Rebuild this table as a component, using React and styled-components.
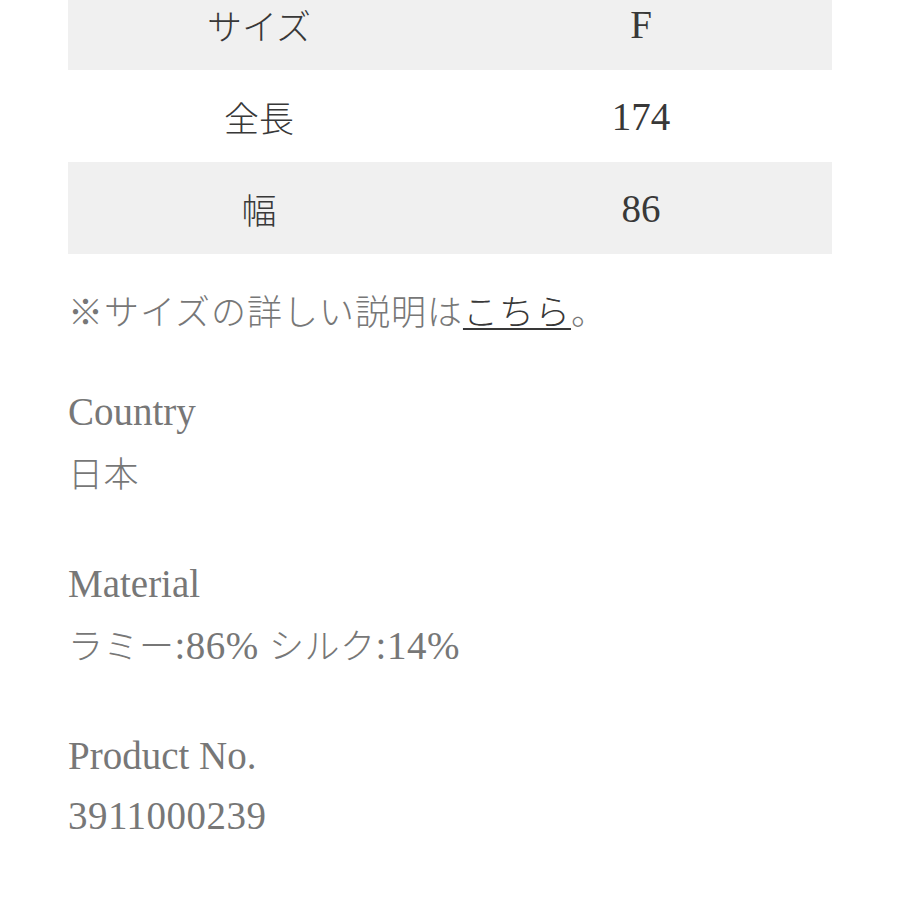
import React from 'react';
import styled, { createGlobalStyle } from 'styled-components';

const GlobalStyle = createGlobalStyle`
  html, body {
    margin: 0;
    padding: 0;
    background: #fff;
  }
  body {
    font-family: "Liberation Serif", "Noto Sans CJK JP", serif;
    font-size: 39px;
  }
`;

const sizes = [
  { label: 'サイズ', value: 'F' },
  { label: '全長', value: '174' },
  { label: '幅', value: '86' },
];

const App = () => {
  return (
    <Page>
      <GlobalStyle />
      <SizeTable>
        {sizes.map((row, i) => (
          <Row key={row.label} shaded={i % 2 === 0}>
            <Cell><Ja>{row.label}</Ja></Cell>
            <Cell>{row.value}</Cell>
          </Row>
        ))}
      </SizeTable>

      <Note>
        <Ja>※サイズの詳しい説明は<Link href="#">こちら</Link>。</Ja>
      </Note>

      <Spec>
        <Label>Country</Label>
        <Value><Ja>日本</Ja></Value>
      </Spec>
      <Spec>
        <Label>Material</Label>
        <Value><Ja>ラミー</Ja>:86%&nbsp;<Ja>シルク</Ja>:14%</Value>
      </Spec>
      <Spec>
        <Label>Product No.</Label>
        <Value>3911000239</Value>
      </Spec>
    </Page>
  );
};

export default App;

const Page = styled.div`
  padding: 0 68px;
  color: #777;
`;

const SizeTable = styled.div`
  margin-top: -22px;
  display: flex;
  flex-direction: column;
`;

const Row = styled.div`
  display: grid;
  grid-template-columns: 1fr 1fr;
  height: 92px;
  background: ${({ shaded }) => (shaded ? '#f0f0f0' : '#fff')};
  color: #383838;
`;

const Cell = styled.div`
  display: flex;
  align-items: center;
  justify-content: center;
`;

const Ja = styled.span`
  font-family: "Noto Sans CJK JP", sans-serif;
  font-size: 35px;
  font-weight: 300;
`;

const Note = styled.p`
  margin: 25px 0 38px;
  line-height: 62px;
  letter-spacing: 1px;
  color: #777;
`;

const Link = styled.a`
  color: #383838;
  text-decoration: underline;
  text-decoration-thickness: 2px;
  text-underline-offset: 3px;
`;

const Spec = styled.div`
  display: flex;
  flex-direction: column;
  margin-bottom: 48px;
`;

const Label = styled.div`
  line-height: 62px;
  color: #777;
`;

const Value = styled.div`
  margin-top: -3px;
  line-height: 63px;
  letter-spacing: 0.5px;
  color: #777;
`;
